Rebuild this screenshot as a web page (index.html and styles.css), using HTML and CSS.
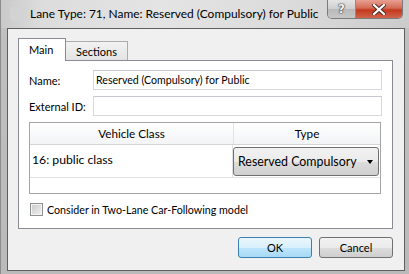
FILE: index.html
```html
<html lang="en">
  <head>
    <meta charset="UTF-8" />
    <title>Lane Type</title>
    <link rel="stylesheet" href="styles.css">
  </head>
  <body>
    <div class="window">
      <div class="titlebar">
        <span class="app-icon"></span>
        <span class="title">Lane Type: 71, Name: Reserved (Compulsory) for Public</span>
        <div class="caption-btns">
          <span class="cap help">?</span>
          <span class="cap close">
            <svg width="14" height="11" viewBox="0 0 14 11">
              <path d="M2 1 L12 10 M12 1 L2 10" stroke="#4a2a26" stroke-width="4" stroke-linecap="square" />
              <path d="M2 1 L12 10 M12 1 L2 10" stroke="#fff" stroke-width="2.2" stroke-linecap="square" />
            </svg>
          </span>
        </div>
      </div>

      <div class="client">
        <div class="tabs">
          <div class="tab active">Main</div>
          <div class="tab">Sections</div>
        </div>

        <div class="panel">
          <div class="field">
            <label for="name">Name:</label>
            <input id="name" type="text" value="Reserved (Compulsory) for Public" />
          </div>
          <div class="field">
            <label for="extid">External ID:</label>
            <input id="extid" type="text" />
          </div>

          <div class="grid">
            <div class="grid-head">
              <div class="col">Vehicle Class</div>
              <div class="col">Type</div>
            </div>
            <div class="grid-row">
              <div class="cell">16: public class</div>
              <div class="cell combo-cell">
                <div class="combo">
                  <span>Reserved Compulsory</span>
                  <span class="arrow"></span>
                </div>
              </div>
            </div>
          </div>

          <label class="check">
            <span class="box"></span>
            Consider in Two-Lane Car-Following model
          </label>
        </div>

        <div class="buttons">
          <button class="default">OK</button>
          <button>Cancel</button>
        </div>
      </div>
    </div>
  </body>
</html>
```

FILE: styles.css
```css
body {
  margin: 0;
  background: #b4b4b4;
  font-family: Lato, "Open Sans", sans-serif;
  font-size: 10.7px;
  color: #000;
}

.window {
  width: 409px;
  height: 274px;
  box-sizing: border-box;
  padding: 0 4px 3px 6px;
  display: flex;
  flex-direction: column;
  background: linear-gradient(to bottom, #c8c8c8, #bfbfbf 40px, #bababa);
  border-left: 1px solid #8c8c8c;
  overflow: hidden;
}

.titlebar {
  height: 28px;
  display: flex;
  align-items: flex-start;
  flex-shrink: 0;
  margin-left: -6px;
  margin-right: -4px;
  background: linear-gradient(to right, #c9c9c9, #dcdcdc 40px, #e4e4e4 160px, #dadada 300px, #cbcbcb);
}

.app-icon {
  width: 13px;
  height: 14px;
  margin: 7px 0 0 9px;
  border-radius: 4px;
  background: #d3d3d3;
}

.title {
  margin: 6px 0 0 7px;
  font-size: 11.95px;
  white-space: nowrap;
  flex: 1;
  min-width: 0;
}

.caption-btns {
  display: flex;
  flex-shrink: 0;
  margin-right: 6px;
  border: 1px solid #7b7b7b;
  border-top: none;
  border-radius: 0 0 5px 5px;
  overflow: hidden;
  height: 18px;
}

.cap {
  display: flex;
  flex-shrink: 0;
  align-items: center;
  justify-content: center;
}

.cap.help {
  width: 27px;
  background: linear-gradient(to bottom, #e4e4e4, #cfcfcf 50%, #b9b9b9 51%, #c7c7c7);
  border-right: 1px solid #8c8c8c;
  color: #f4f4f4;
  font-family: "DejaVu Sans", sans-serif;
  font-weight: bold;
  font-size: 12px;
  text-shadow: 0 0 1px #333, 0 0 1px #333, 0 0 2px #555;
}

.cap.close {
  width: 46px;
  background: linear-gradient(to bottom, #e8a093, #d46b55 45%, #c4381d 55%, #d0654e);
}

.client {
  flex: 1;
  display: flex;
  flex-direction: column;
  background: #f0f0f0;
  border: 1px solid #5f5f5f;
  padding: 9px 11px 12px 10px;
}

.tabs {
  display: flex;
  align-items: flex-end;
  height: 22px;
}

.tab {
  height: 18px;
  padding: 0 10px;
  border: 1px solid #acacac;
  border-bottom: none;
  background: linear-gradient(to bottom, #f2f2f2, #e4e4e4);
  line-height: 19px;
  font-size: 11px;
}

.tab.active {
  height: 22px;
  padding: 0 10px;
  width: 26px;
  background: #fff;
  border-color: #898c95;
  line-height: 21px;
  margin-bottom: -1px;
  position: relative;
  z-index: 1;
}

.tab.active + .tab {
  border-left: none;
}

.panel {
  height: 169px;
  box-sizing: border-box;
  background: #fff;
  border: 1px solid #898c95;
  padding: 9px 10px 0 10px;
}

.field {
  display: flex;
  align-items: center;
  height: 20px;
  margin-bottom: 6px;
}

.field label {
  width: 64px;
  flex-shrink: 0;
  font-size: 11px;
}

.field input {
  flex: 1;
  height: 20px;
  box-sizing: border-box;
  border: 1px solid #d5d8dc;
  border-top-color: #c5c9cf;
  padding: 0 2px;
  font: inherit;
  font-size: 10.6px;
  outline: 0;
}

.grid {
  height: 72px;
  box-sizing: border-box;
  border: 1px solid #a5a5a5;
  margin-right: 1px;
}

.grid-head,
.grid-row {
  display: grid;
  grid-template-columns: 203px 1fr;
}

.grid-head {
  height: 21px;
  background: linear-gradient(to bottom, #fff, #f3f4f6);
  border-bottom: 1px solid #d5d5d5;
}

.grid-head .col {
  text-align: center;
  line-height: 20px;
  font-size: 11.7px;
}

.grid-head .col + .col {
  border-left: 1px solid #e2e3e5;
}

.grid-row {
  height: 32px;
  border-bottom: 1px solid #e2e2e2;
}

.cell {
  padding-left: 2px;
  line-height: 30px;
  border-right: 1px solid #e2e2e2;
  font-size: 12.2px;
}

.combo-cell {
  padding: 2px 0 1px 0;
  border-right: none;
  line-height: normal;
}

.combo {
  height: 29px;
  box-sizing: border-box;
  margin-right: 1px;
  border: 1px solid #707070;
  border-radius: 3px;
  background: linear-gradient(to bottom, #f2f2f2, #ebebeb 50%, #dddddd 51%, #cfcfcf);
  display: flex;
  align-items: center;
  justify-content: space-between;
  padding: 0 5px 0 4px;
  font-size: 12.4px;
}

.arrow {
  width: 0;
  height: 0;
  border-left: 3.5px solid transparent;
  border-right: 3.5px solid transparent;
  border-top: 4px solid #000;
}

.check {
  display: flex;
  align-items: center;
  margin-top: 8px;
  height: 14px;
}

.check .box {
  width: 13px;
  height: 13px;
  box-sizing: border-box;
  margin: 0 4px 0 1px;
  border: 1px solid #8e8f8f;
  background: linear-gradient(135deg, #cbcbcb, #f0f0f0);
  box-shadow: inset 0 0 0 1px #f4f4f4;
}

.buttons {
  display: flex;
  justify-content: flex-end;
  gap: 7px;
  margin-top: 8px;
}

.buttons button {
  width: 74px;
  height: 21px;
  border: 1px solid #707070;
  border-radius: 3px;
  background: linear-gradient(to bottom, #f2f2f2, #ebebeb 50%, #dddddd 51%, #cfcfcf);
  font: inherit;
  font-size: 11px;
  padding: 0;
}

.buttons button.default {
  border-color: #3c7fb1;
  background: linear-gradient(to bottom, #eaf6fd, #d9f0fc 50%, #bee6fd 51%, #a7d9f5);
}
```
